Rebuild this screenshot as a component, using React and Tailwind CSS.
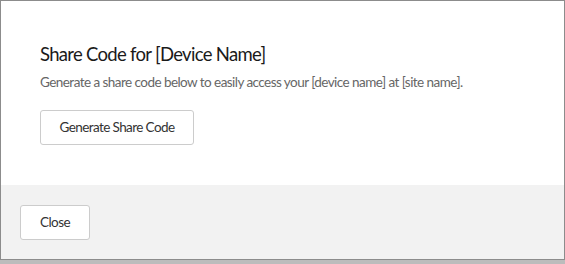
import React from "react";

const App = () => {
  return (
    <div className="w-[565px] h-[264px] bg-[#bcbcbc]" style={{ fontFamily: "Lato, 'Open Sans', sans-serif" }}>
      <div className="h-[260px] border border-[#8c8c8c] bg-white flex flex-col">
        <div className="flex-1 pl-[39px] pt-[39px]">
          <h2 className="text-[18.5px] leading-[28px] tracking-[-0.7px] text-[#1a1a1a]">Share Code for [Device Name]</h2>
          <p className="mt-[4px] text-[13.5px] leading-[20px] tracking-[-0.55px] text-[#666666]">
            Generate a share code below to easily access your [device name] at [site name].
          </p>
          <button className="mt-[18px] h-[35px] w-[154px] rounded-[3px] border border-[#cccccc] bg-white text-[13.5px] tracking-[-0.6px] text-[#333333]">
            Generate Share Code
          </button>
        </div>
        <div className="h-[74px] bg-[#f2f2f2] pl-[19px] pt-[20px]">
          <button className="h-[35px] w-[70px] rounded-[3px] border border-[#cccccc] bg-white text-[13.5px] tracking-[-0.6px] text-[#333333]">
            Close
          </button>
        </div>
      </div>
    </div>
  );
};

export default App;
